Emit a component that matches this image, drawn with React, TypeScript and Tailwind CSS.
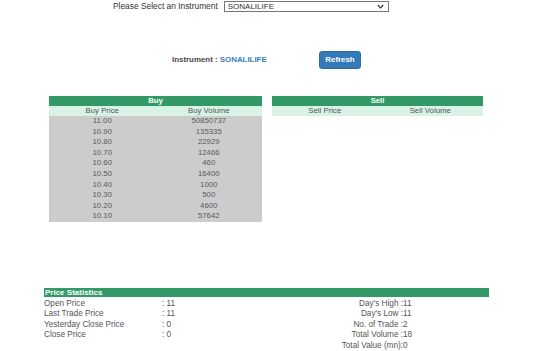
import React from 'react'

const buyRows = [
  ['11.00', '50850737'],
  ['10.90', '135335'],
  ['10.80', '22929'],
  ['10.70', '12466'],
  ['10.60', '460'],
  ['10.50', '16400'],
  ['10.40', '1000'],
  ['10.30', '500'],
  ['10.20', '4600'],
  ['10.10', '57642'],
]

const leftStats = [
  ['Open Price', ': 11'],
  ['Last Trade Price', ': 11'],
  ['Yesterday Close Price', ': 0'],
  ['Close Price', ': 0'],
  ['', ''],
]

const rightStats = [
  ["Day's High :", '11'],
  ["Day's Low :", '11'],
  ['No. of Trade :', '2'],
  ['Total Volume :', '18'],
  ['Total Value (mn):', '0'],
]

function OrderTable({ title, cols, rows, width }: { title: string; cols: [string, string]; rows: string[][]; width: string }) {
  return (
    <div className={width}>
      <div className="h-[10px] bg-[#339966] text-white font-bold text-[7.7px] leading-[10px] text-center">{title}</div>
      <div className="h-[10px] bg-[#d9f2e6] grid grid-cols-2 text-[7.8px] leading-[10px] text-center text-[#555]">
        <div>{cols[0]}</div>
        <div>{cols[1]}</div>
      </div>
      {rows.map((r, i) => (
        <div key={i} className="h-[10.6px] bg-[#cccccc] grid grid-cols-2 text-[7.8px] leading-[10.6px] text-center text-[#5a5a5a]">
          <div>{r[0]}</div>
          <div>{r[1]}</div>
        </div>
      ))}
    </div>
  )
}

export default function App() {
  return (
    <div className="w-[534px] h-[351px] bg-white overflow-hidden font-['Liberation_Sans',Arial,sans-serif]">
      {/* instrument selector */}
      <div className="flex items-center pl-[113px] pt-[1px] h-[12px]">
        <span className="text-[8.4px] text-[#333]">Please Select an Instrument</span>
        <div className="ml-[6px] w-[165px] h-[11px] border border-[#767676] flex items-center justify-between pl-[3px] pr-[4px] text-[8px] text-[#333] leading-none">
          <span>SONALILIFE</span>
          <svg width="7" height="5" viewBox="0 0 7 5">
            <path d="M0.8 1 L3.5 3.8 L6.2 1" fill="none" stroke="#333" strokeWidth="1.2" />
          </svg>
        </div>
      </div>

      <div className="flex items-center mt-[39px] h-[18px] pl-[172px]">
        <div className="w-[147px] text-[7.9px] font-bold text-[#4a4a4a]">
          Instrument : <span className="text-[#3a80b8]">SONALILIFE</span>
        </div>
        <button className="w-[42px] h-[18px] bg-[#337ab7] border border-[#2e6da4] rounded-[3px] text-white font-bold text-[7.9px] leading-none">
          Refresh
        </button>
      </div>

      {/* buy / sell */}
      <div className="flex gap-[10px] pl-[49px] mt-[27px]">
        <OrderTable title="Buy" cols={['Buy Price', 'Buy Volume']} rows={buyRows} width="w-[213px]" />
        <OrderTable title="Sell" cols={['Sell Price', 'Sell Volume']} rows={[]} width="w-[211px]" />
      </div>

      {/* price statistics */}
      <div className="ml-[44px] w-[445px] mt-[66px]">
        <div className="h-[9px] bg-[#339966] text-white font-bold text-[8px] leading-[9px] pl-[1px]">Price Statistics</div>
        <div className="grid grid-cols-[118px_112px_129px_1fr] pt-[2px] text-[8.2px] text-[#555] leading-[10.4px]">
          {rightStats.map((r, i) => (
            <React.Fragment key={i}>
              <div>{leftStats[i][0]}</div>
              <div>{leftStats[i][1]}</div>
              <div className="text-right">{r[0]}</div>
              <div>{r[1]}</div>
            </React.Fragment>
          ))}
        </div>
      </div>
    </div>
  )
}
